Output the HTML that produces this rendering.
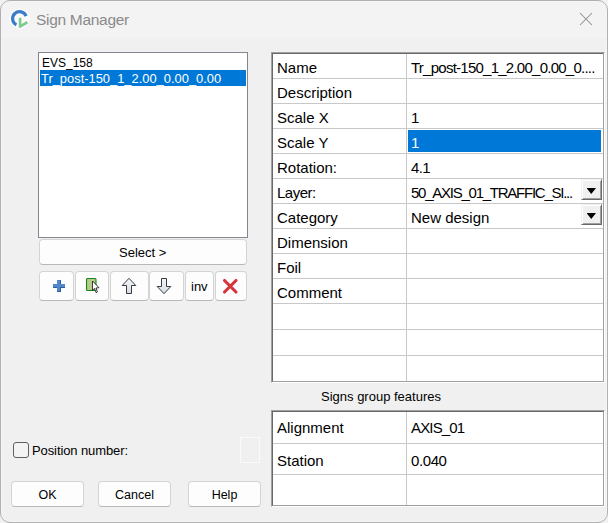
<!DOCTYPE html>
<html><head><meta charset="utf-8">
<style>
*{box-sizing:border-box;margin:0;padding:0}
html,body{width:608px;height:523px;overflow:hidden;background:#f2f2f2}
body{position:relative;font-family:"Liberation Sans",sans-serif;color:#000}
.a{position:absolute}
.t{position:absolute;white-space:nowrap;line-height:1}
#win{position:absolute;left:0;top:0;width:608px;height:523px;border:1px solid #b0b0b0;border-radius:10px;background:#f0f0f0;overflow:hidden;box-shadow:inset 0 0 0 1px #f6f6f6}
#title{position:absolute;left:1px;top:1px;width:604px;height:36px;background:#f3f3f3}
.btn{position:absolute;background:#fdfdfd;border:1px solid #d4d4d4;border-bottom-color:#b8b8b8;border-radius:4px}
.grid{position:absolute;background:#fff;border-top:1px solid #a0a0a0;border-left:1px solid #a0a0a0;border-right:1px solid #fff;border-bottom:1px solid #fff}
.gin{position:absolute;left:0;top:0;right:0;bottom:0;border-top:1px solid #696969;border-left:1px solid #696969;border-right:1px solid #a0a0a0;border-bottom:1px solid #a0a0a0}
.hl{position:absolute;height:1px;background:#c8c8c8}
.vl{position:absolute;width:1px;background:#c8c8c8}
.lbl{position:absolute;font-size:15px;white-space:nowrap;line-height:1}
.dd{position:absolute;width:21px;height:21px;background:#f0f0f0;border-top:1px solid #f0f0f0;border-left:1px solid #f0f0f0;border-right:1px solid #696969;border-bottom:1px solid #696969;box-shadow:inset 1px 1px 0 #fff,inset -1px -1px 0 #a0a0a0}
.tri{position:absolute;left:4.5px;top:8px;width:9.5px;height:6px;background:#000;clip-path:polygon(0 0,100% 0,50% 100%)}
</style></head><body>
<div id="win">
  <div id="title"></div>
</div>

<!-- title -->
<svg class="a" style="left:8px;top:8px" width="24" height="24" viewBox="0 0 24 24">
  <circle cx="11.5" cy="10.7" r="10.3" fill="#fff" opacity="0.6"/>
  <path d="M18.09 8.08 A7.0 7.0 0 1 0 8.42 16.94" fill="none" stroke="#3b7cc9" stroke-width="3.2"/>
  <path d="M10.8 9.8 H13.4 V16.2 L18.7 13.1 L20 15.5 L12.6 19.8 H10.8 Z" fill="#7dca8d"/>
</svg>
<div class="t" style="left:36px;top:11.5px;font-size:15.5px;color:#8a8a8a;letter-spacing:-0.3px">Sign Manager</div>
<svg class="a" style="left:579px;top:12px" width="14" height="14" viewBox="0 0 14 14">
  <path d="M1 1 L13 13 M13 1 L1 13" stroke="#8c8c8c" stroke-width="1.05"/>
</svg>

<!-- listbox -->
<div class="a" style="left:38px;top:52px;width:210px;height:186px;background:#fff;border:1px solid #82878f"></div>
<div class="t" style="left:42px;top:57px;font-size:12px">EVS_158</div>
<div class="a" style="left:40px;top:70px;width:206px;height:16px;background:#0078d7"></div>
<div class="t" style="left:41px;top:73px;font-size:12.9px;color:#fff">Tr_post-150_1_2.00_0.00_0.00</div>

<!-- select button -->
<div class="btn" style="left:39px;top:239px;width:208px;height:26px"></div>
<div class="t" style="left:119px;top:246px;font-size:13px">Select &gt;</div>

<!-- icon buttons -->
<div class="btn" style="left:39px;top:271px;width:35px;height:30px"></div>
<div class="btn" style="left:75px;top:271px;width:34px;height:30px"></div>
<div class="btn" style="left:110px;top:271px;width:39px;height:30px"></div>
<div class="btn" style="left:149px;top:271px;width:35px;height:30px"></div>
<div class="btn" style="left:185px;top:271px;width:29px;height:30px"></div>
<div class="btn" style="left:215px;top:271px;width:32px;height:30px"></div>


<!-- icons -->
<svg class="a" style="left:39px;top:271px" width="210" height="30" viewBox="39 271 210 30">
  <!-- plus -->
  <path d="M57 280 H61 V284 H65 V288 H61 V292 H57 V288 H53 V284 H57 Z" fill="#2a5da3"/>
  <path d="M57 280 H60 V284 H65 V287 H60 V291 H57 V287 H53 V284 H57 Z" fill="#5288c9"/>
  <!-- green page + cursor -->
  <rect x="86.5" y="278.5" width="9.5" height="12" rx="1" fill="#b6ca8a" stroke="#15861a" stroke-width="1.1"/>
  <path d="M92.5 281 V290.3 L94.6 288.4 L96 292.6 L97.4 292 L96 288 L99 287.7 Z" fill="#fff" stroke="#1e1e1e" stroke-width="0.85" stroke-linejoin="round"/>
  <!-- up arrow -->
  <defs><linearGradient id="ga" x1="0" y1="0" x2="0" y2="1"><stop offset="0" stop-color="#f4f5f7"/><stop offset="1" stop-color="#d8dce3"/></linearGradient></defs>
  <path d="M129 278.3 L135.8 285.5 H131.5 V293.5 H126.5 V285.5 H122.2 Z" fill="url(#ga)" stroke="#2c323a" stroke-width="0.95" stroke-linejoin="round"/>
  <!-- down arrow -->
  <path d="M161.5 278.5 H166.5 V286.5 H170.8 L164 293.7 L157.2 286.5 H161.5 Z" fill="url(#ga)" stroke="#2c323a" stroke-width="0.95" stroke-linejoin="round"/>
  <!-- red x -->
  <path d="M224.5 280.5 L236 292 M236 280.5 L224.5 292" stroke="#d8323b" stroke-width="3.1" stroke-linecap="round"/>
</svg>
<div class="t" style="left:191px;top:280px;font-size:13px">inv</div>

<!-- checkbox -->
<div class="a" style="left:13px;top:442px;width:16px;height:16px;border:1px solid #606060;border-radius:3px;background:#f3f3f3"></div>
<div class="t" style="left:32px;top:444px;font-size:13px;letter-spacing:-0.1px">Position number:</div>
<div class="a" style="left:240px;top:437px;width:20px;height:26px;border:1px solid #fafafa"></div>

<!-- bottom buttons -->
<div class="btn" style="left:11px;top:481px;width:73px;height:26px"></div>
<div class="t" style="left:11px;width:73px;text-align:center;top:489px;font-size:12.5px">OK</div>
<div class="btn" style="left:98px;top:481px;width:73px;height:26px"></div>
<div class="t" style="left:98px;width:73px;text-align:center;top:489px;font-size:12.5px">Cancel</div>
<div class="btn" style="left:188px;top:481px;width:73px;height:26px"></div>
<div class="t" style="left:188px;width:73px;text-align:center;top:489px;font-size:12.5px">Help</div>

<!-- property grid -->
<div class="grid" style="left:271px;top:52px;width:334px;height:331px"><div class="gin"></div></div>
<div class="hl" style="left:273px;top:78px;width:330px"></div>
<div class="hl" style="left:273px;top:103px;width:330px"></div>
<div class="hl" style="left:273px;top:128px;width:330px"></div>
<div class="hl" style="left:273px;top:153px;width:330px"></div>
<div class="hl" style="left:273px;top:178px;width:330px"></div>
<div class="hl" style="left:273px;top:203px;width:330px"></div>
<div class="hl" style="left:273px;top:228px;width:330px"></div>
<div class="hl" style="left:273px;top:253px;width:330px"></div>
<div class="hl" style="left:273px;top:278px;width:330px"></div>
<div class="hl" style="left:273px;top:303px;width:330px"></div>
<div class="hl" style="left:273px;top:329px;width:330px"></div>
<div class="hl" style="left:273px;top:355px;width:330px"></div>
<div class="vl" style="left:406px;top:54px;height:327px"></div>

<div class="lbl" style="left:277px;top:60px">Name</div>
<div class="lbl" style="left:277px;top:85px">Description</div>
<div class="lbl" style="left:277px;top:110px">Scale X</div>
<div class="lbl" style="left:277px;top:135px">Scale Y</div>
<div class="lbl" style="left:277px;top:160px">Rotation:</div>
<div class="lbl" style="left:277px;top:185px;letter-spacing:-0.5px">Layer:</div>
<div class="lbl" style="left:277px;top:210px">Category</div>
<div class="lbl" style="left:277px;top:235px">Dimension</div>
<div class="lbl" style="left:277px;top:260px">Foil</div>
<div class="lbl" style="left:277px;top:285px">Comment</div>

<div class="lbl" style="left:411px;top:60px;letter-spacing:-0.75px">Tr_post-150_1_2.00_0.00_0....</div>
<div class="lbl" style="left:411px;top:110px">1</div>
<div class="a" style="left:408px;top:130px;width:193px;height:22px;background:#0078d7"></div>
<div class="lbl" style="left:411px;top:135px;color:#fff">1</div>
<div class="lbl" style="left:411px;top:160px;letter-spacing:-0.6px">4.1</div>
<div class="lbl" style="left:411px;top:185px;letter-spacing:-1.25px">50_AXIS_01_TRAFFIC_SI...</div>
<div class="dd" style="left:581px;top:179px"><div class="tri"></div></div>
<div class="lbl" style="left:411px;top:210px">New design</div>
<div class="dd" style="left:581px;top:204px"><div class="tri"></div></div>

<div class="t" style="left:321px;top:390px;font-size:13px">Signs group features</div>

<!-- second grid -->
<div class="grid" style="left:271px;top:410px;width:334px;height:97px"><div class="gin"></div></div>
<div class="hl" style="left:273px;top:443px;width:330px"></div>
<div class="hl" style="left:273px;top:474px;width:330px"></div>
<div class="vl" style="left:406px;top:412px;height:93px"></div>
<div class="lbl" style="left:277px;top:420px">Alignment</div>
<div class="lbl" style="left:411px;top:420px;letter-spacing:-0.85px">AXIS_01</div>
<div class="lbl" style="left:277px;top:453px">Station</div>
<div class="lbl" style="left:411px;top:453px;letter-spacing:-0.4px">0.040</div>

</body></html>
